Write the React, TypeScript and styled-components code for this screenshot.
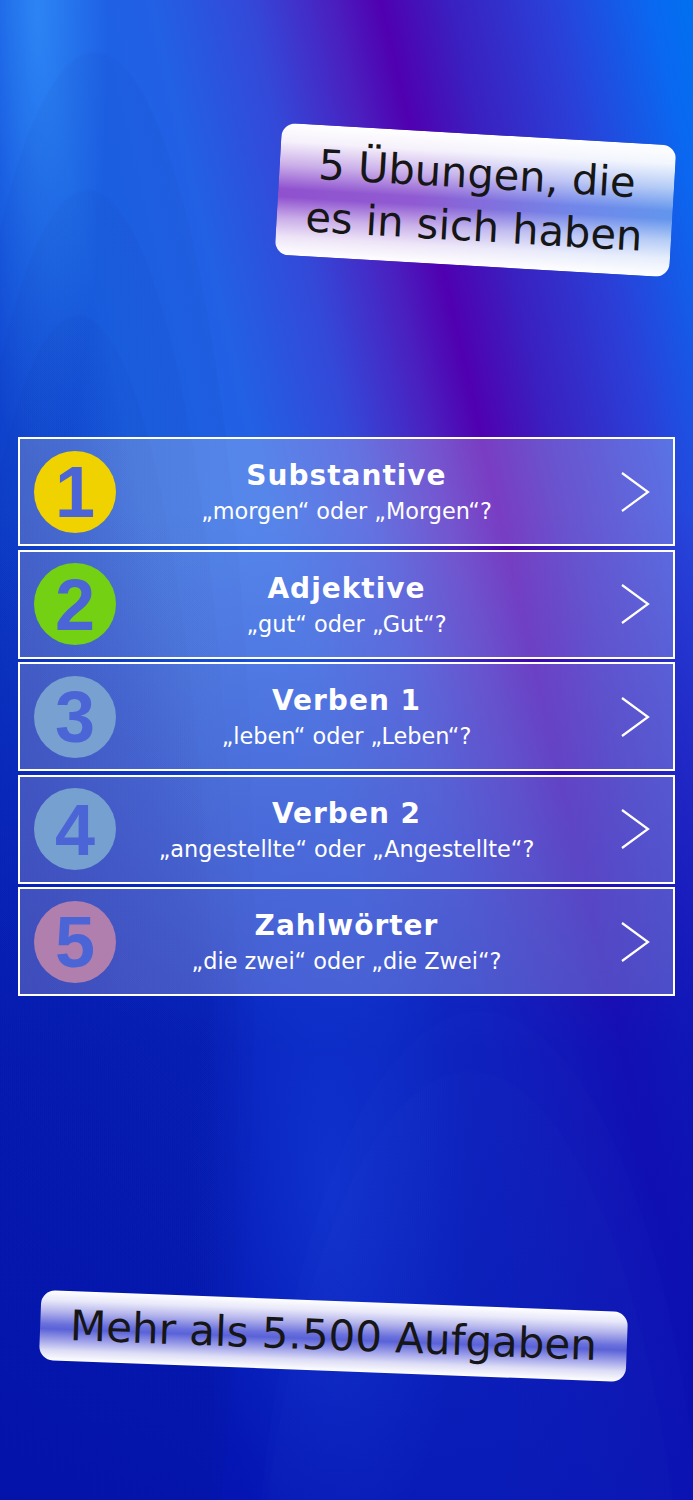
import styled, { createGlobalStyle } from 'styled-components';

interface IExercise {
  num: number;
  title: string;
  hint: string;
  badge: string;
}

const EXERCISES: IExercise[] = [
  { num: 1, title: 'Substantive', hint: '„morgen“ oder „Morgen“?', badge: '#efd200' },
  { num: 2, title: 'Adjektive', hint: '„gut“ oder „Gut“?', badge: '#74d012' },
  { num: 3, title: 'Verben 1', hint: '„leben“ oder „Leben“?', badge: '#78a0d0' },
  { num: 4, title: 'Verben 2', hint: '„angestellte“ oder „Angestellte“?', badge: '#76a0d0' },
  { num: 5, title: 'Zahlwörter', hint: '„die zwei“ oder „die Zwei“?', badge: '#b07fae' },
];

const GlobalStyle = createGlobalStyle`
  html, body {
    margin: 0;
    padding: 0;
  }
  body {
    font-family: 'DejaVu Sans', 'Liberation Sans', sans-serif;
  }
`;

const Chevron = () => (
  <svg width="30" height="42" viewBox="0 0 30 42" fill="none">
    <polyline points="2,2 28,21 2,40" stroke="#ffffff" strokeWidth="2.2" />
  </svg>
);

export default function App() {
  return (
    <>
      <GlobalStyle />
      <SPage>
        <SHeader>
          <STopBanner>
            5 Übungen, die
            <br />
            es in sich haben
          </STopBanner>
        </SHeader>

        <SList>
          {EXERCISES.map((item) => (
            <SCard key={item.num}>
              <SBadge color={item.badge}>{item.num}</SBadge>
              <STexts>
                <STitle>{item.title}</STitle>
                <SHint>{item.hint}</SHint>
              </STexts>
              <SArrow>
                <Chevron />
              </SArrow>
            </SCard>
          ))}
        </SList>

        <SFooter>
          <SBottomBanner>Mehr als 5.500 Aufgaben</SBottomBanner>
        </SFooter>
      </SPage>
    </>
  );
}

const SPage = styled.div`
  width: 693px;
  height: 1500px;
  overflow: hidden;
  display: flex;
  flex-direction: column;
  background:
    radial-gradient(ellipse 160px 900px at 95px 950px, rgba(10, 20, 110, 0.04) 99.5%, transparent 100%),
    radial-gradient(ellipse 150px 900px at 88px 1088px, rgba(10, 20, 110, 0.04) 99.5%, transparent 100%),
    radial-gradient(ellipse 140px 900px at 78px 1213px, rgba(10, 20, 110, 0.04) 99.5%, transparent 100%),
    radial-gradient(ellipse 230px 700px at 480px 1710px, rgba(130, 150, 255, 0.015) 99.5%, transparent 100%),
    radial-gradient(ellipse 220px 700px at 470px 1770px, rgba(130, 150, 255, 0.015) 99.5%, transparent 100%),
    radial-gradient(ellipse 140px 380px at 330px 1190px, rgba(30, 80, 235, 0.36), rgba(30, 80, 235, 0) 100%),
    radial-gradient(ellipse 70px 480px at 38px 0px, rgba(60, 160, 255, 0.55), rgba(60, 160, 255, 0) 100%),
    linear-gradient(
      180deg,
      rgba(4, 20, 180, 0) 0%,
      rgba(4, 20, 180, 0) 34%,
      rgba(5, 22, 184, 0.5) 56%,
      rgba(4, 20, 180, 0.8) 70%,
      rgba(3, 17, 176, 0.92) 100%
    ),
    linear-gradient(
      77deg,
      #0a2cc0 0%,
      #0c3ccc 18%,
      #1250dc 30%,
      #1a62e6 36%,
      #2260e4 48%,
      #3448d8 57.4%,
      #4a20c0 65.1%,
      #5000b0 69.9%,
      #3a20c0 76.6%,
      #2a40d8 86.2%,
      #0a68f0 95.9%,
      #0070f0 100%
    );
`;

const SHeader = styled.div`
  height: 437px;
  box-sizing: border-box;
  padding: 134px 20px 0 0;
  display: flex;
  justify-content: flex-end;
  align-items: flex-start;
`;

const STopBanner = styled.div`
  width: 395px;
  height: 132px;
  box-sizing: border-box;
  padding: 13px 0;
  border-radius: 14px;
  transform: rotate(3.3deg);
  background:
    linear-gradient(
      180deg,
      #ffffff 0%,
      rgba(255, 255, 255, 0.92) 14%,
      rgba(255, 255, 255, 0.55) 32%,
      rgba(255, 255, 255, 0.05) 50%,
      rgba(255, 255, 255, 0.05) 56%,
      rgba(255, 255, 255, 0.55) 72%,
      rgba(255, 255, 255, 0.85) 86%,
      #ffffff 100%
    ),
    linear-gradient(90deg, #8a48cc 0%, #8a52d0 35%, #6a80e8 75%, #5a90ec 100%);
  color: #161616;
  font-size: 41.6px;
  line-height: 53px;
  text-align: center;
  white-space: nowrap;
`;

const SList = styled.div`
  display: flex;
  flex-direction: column;
  gap: 3.5px;
  padding: 0 18px;
`;

const SCard = styled.div`
  height: 109px;
  box-sizing: border-box;
  border: 2px solid #ffffff;
  padding: 0 14px;
  display: grid;
  grid-template-columns: 1fr auto 1fr;
  align-items: center;
  background:
    linear-gradient(90deg, rgba(40, 30, 120, 0.12) 0%, rgba(40, 30, 120, 0) 30%),
    rgba(255, 255, 255, 0.24);
`;

const SBadge = styled.div<{ color: string }>`
  width: 82px;
  height: 82px;
  border-radius: 50%;
  background: ${(props) => props.color};
  display: flex;
  align-items: center;
  justify-content: center;
  color: #4b65d6;
  font-family: 'Liberation Sans', Arial, sans-serif;
  font-weight: bold;
  font-size: 72px;
  line-height: 1;
  padding-top: 1px;
  box-sizing: border-box;
`;

const STexts = styled.div`
  display: flex;
  flex-direction: column;
  align-items: center;
  color: #ffffff;
  white-space: nowrap;
`;

const STitle = styled.div`
  font-weight: bold;
  font-size: 28px;
  line-height: 34px;
  letter-spacing: 1px;
`;

const SHint = styled.div`
  margin-top: 5px;
  font-size: 22.4px;
  line-height: 26px;
`;

const SArrow = styled.div`
  justify-self: end;
  margin-right: 9px;
  display: flex;
  align-items: center;
`;

const SFooter = styled.div`
  padding: 305px 0 0 40px;
`;

const SBottomBanner = styled.div`
  width: 587px;
  height: 70px;
  border-radius: 14px;
  transform: rotate(2.15deg);
  background: linear-gradient(
    180deg,
    #ffffff 0%,
    #e8e8fa 14%,
    #b4b4ec 30%,
    #6a70dc 48%,
    #5a62d8 55%,
    #9c9ee8 70%,
    #dcdcf6 85%,
    #ffffff 100%
  );
  color: #161616;
  font-size: 42px;
  line-height: 70px;
  text-align: center;
  white-space: nowrap;
`;
